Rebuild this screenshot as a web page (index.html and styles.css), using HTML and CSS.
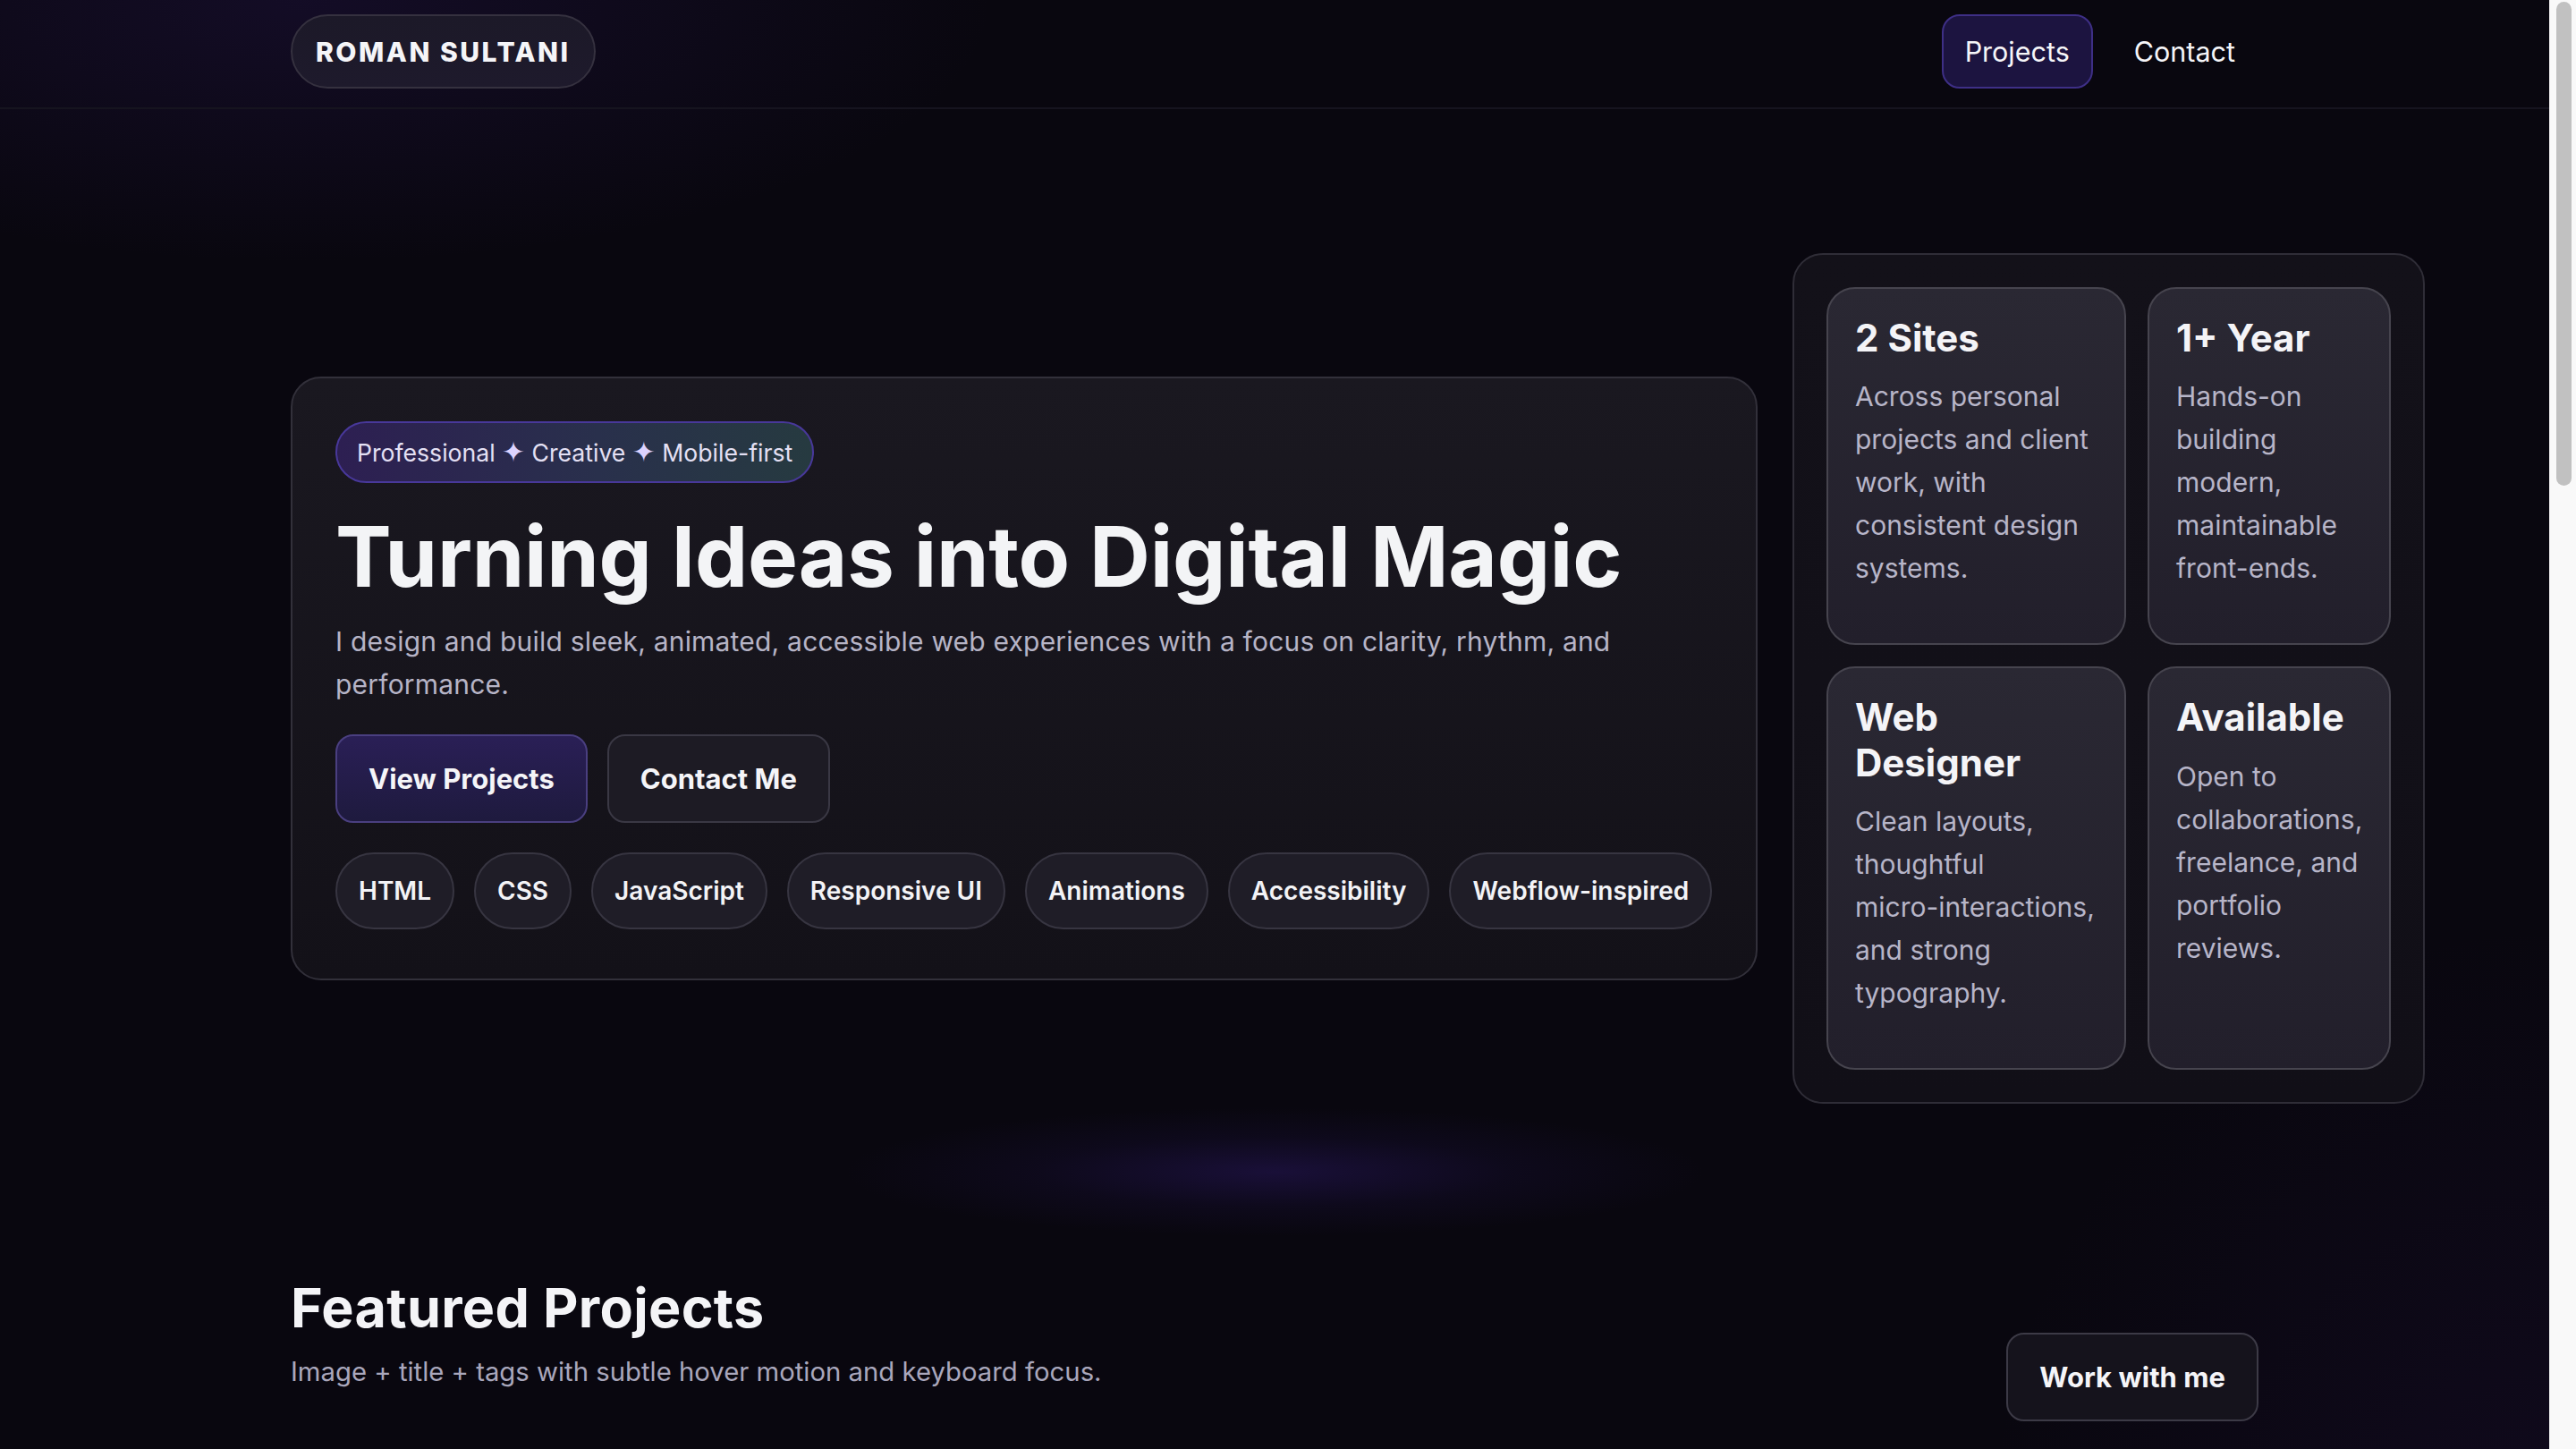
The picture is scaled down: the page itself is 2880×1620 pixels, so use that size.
FILE: index.html
```html
<!DOCTYPE html>
<html lang="en">
<head>
<meta charset="utf-8">
<title>Roman Sultani — Web Designer</title>
<link rel="stylesheet" href="styles.css">
</head>
<body>
<header class="site-header">
  <div class="container header-inner">
    <a class="logo" href="#">ROMAN SULTANI</a>
    <nav class="nav">
      <a class="nav-link active" href="#projects">Projects</a>
      <a class="nav-link" href="#contact">Contact</a>
    </nav>
  </div>
</header>
<main class="page">
  <section class="hero container">
    <div class="hero-grid">
      <div class="hero-card">
        <span class="badge">Professional <span class="spark">✦</span> Creative <span class="spark">✦</span> Mobile-first</span>
        <h1 class="hero-title">Turning Ideas into Digital Magic</h1>
        <p class="lead">I design and build sleek, animated, accessible web experiences with a focus on clarity, rhythm, and performance.</p>
        <div class="actions">
          <a class="btn btn-primary" href="#projects">View Projects</a>
          <a class="btn" href="#contact">Contact Me</a>
        </div>
        <ul class="chips">
          <li class="chip">HTML</li>
          <li class="chip">CSS</li>
          <li class="chip">JavaScript</li>
          <li class="chip">Responsive UI</li>
          <li class="chip">Animations</li>
          <li class="chip">Accessibility</li>
          <li class="chip">Webflow-inspired</li>
        </ul>
      </div>
      <div class="stats">
        <div class="stat">
          <h3 class="stat-title">2 Sites</h3>
          <p class="stat-text">Across personal projects and client work, with consistent design systems.</p>
        </div>
        <div class="stat">
          <h3 class="stat-title">1+ Year</h3>
          <p class="stat-text">Hands-on building modern, maintainable <span class="nowrap">front-ends.</span></p>
        </div>
        <div class="stat">
          <h3 class="stat-title">Web Designer</h3>
          <p class="stat-text">Clean layouts, thoughtful <span class="nowrap">micro-interactions,</span> and strong typography.</p>
        </div>
        <div class="stat">
          <h3 class="stat-title">Available</h3>
          <p class="stat-text">Open to collaborations, freelance, and portfolio reviews.</p>
        </div>
      </div>
    </div>
  </section>

  <div class="divider-glow"></div>

  <section class="projects container" id="projects">
    <div class="section-head">
      <div>
        <h2 class="section-title">Featured Projects</h2>
        <p class="section-sub">Image + title + tags with subtle hover motion and keyboard focus.</p>
      </div>
      <a class="btn btn-dark" href="#contact">Work with me</a>
    </div>
    <div class="project-grid">
      <article class="project">
        <div class="project-media"></div>
        <h3 class="project-title">Portfolio Site</h3>
        <p class="project-text">Personal portfolio with animated hero and project gallery.</p>
      </article>
      <article class="project">
        <div class="project-media"></div>
        <h3 class="project-title">Client Landing Page</h3>
        <p class="project-text">Responsive marketing page built with a reusable design system.</p>
      </article>
    </div>
  </section>

  <section class="contact container" id="contact">
    <h2 class="section-title">Let's work together</h2>
    <p class="section-sub">Open to collaborations, freelance, and portfolio reviews.</p>
  </section>
</main>
<div class="scrollbar" aria-hidden="true"><div class="scrollbar-thumb"></div></div>
</body>
</html>
```

FILE: styles.css
```css
html {
  background: #09070f;
}

body {
  margin: 0 30px 0 0;
  font-family: Inter, "Noto Sans", "DejaVu Sans", sans-serif;
  color: #f3f3f6;
  background:
    radial-gradient(1100px 420px at 12% 0%, rgba(62, 34, 130, 0.20), transparent 70%),
    radial-gradient(900px 1000px at 100% 35%, rgba(58, 26, 110, 0.15), transparent 70%),
    radial-gradient(900px 500px at 100% 100%, rgba(50, 26, 95, 0.08), transparent 70%),
    #09070f;
}

a {
  color: inherit;
  text-decoration: none;
}

.nowrap {
  white-space: nowrap;
}

.container {
  width: 2200px;
  margin: 0 auto;
}

/* Scrollbar (drawn, overlays the right edge of the window) */
.scrollbar {
  position: fixed;
  top: 0;
  right: 0;
  bottom: 0;
  width: 30px;
  background: #f9f9f9;
  border-left: 1px solid #efefef;
  box-sizing: border-box;
}

.scrollbar-thumb {
  position: absolute;
  top: 2px;
  left: 7px;
  width: 17px;
  height: 541px;
  border-radius: 9px;
  background: #c1c1c1;
}

/* Header */
.site-header {
  border-bottom: 2px solid #16141f;
}

.header-inner {
  display: flex;
  align-items: center;
  justify-content: space-between;
  padding: 16px 0 21px;
}

.logo {
  display: flex;
  align-items: center;
  height: 83px;
  box-sizing: border-box;
  padding: 0 26px;
  border: 2px solid #35313f;
  border-radius: 999px;
  background: linear-gradient(180deg, #1c1928, #1e1a2c);
  font-size: 30px;
  font-weight: 800;
  letter-spacing: 2.5px;
  color: #f5f5f8;
}

.nav {
  display: flex;
  gap: 20px;
}

.nav-link {
  display: flex;
  align-items: center;
  height: 83px;
  box-sizing: border-box;
  padding: 0 24px;
  border: 2px solid transparent;
  border-radius: 20px;
  font-size: 30.5px;
  color: #f5f5f8;
}

.nav-link.active {
  background: #1c1440;
  border-color: #3e2f86;
}

/* Hero */
.hero {
  padding-top: 161px;
}

.hero-grid {
  display: flex;
  align-items: center;
  gap: 39px;
}

.hero-card {
  flex: none;
  width: 1640px;
  box-sizing: border-box;
  padding: 48px 48px 55px;
  border: 2px solid #32303a;
  border-radius: 34px;
  background: linear-gradient(180deg, #1a1820 0%, #131118 100%);
}

.badge {
  display: inline-flex;
  align-items: center;
  height: 69px;
  box-sizing: border-box;
  padding: 0 22px;
  border: 2px solid #48389a;
  border-radius: 999px;
  background: linear-gradient(90deg, #2d1f52 0%, #29304c 55%, #263a40 100%);
  font-size: 26.6px;
  color: #e4e0f4;
  white-space: pre;
}

.spark {
  color: #ddd3ff;
  font-family: "DejaVu Sans", sans-serif;
  font-size: 31px;
  line-height: 1;
}

.hero-title {
  margin: 31px 0 0;
  font-size: 94px;
  line-height: 1.1;
  font-weight: 700;
  letter-spacing: -0.2px;
  color: #f3f4f6;
}

.lead {
  margin: 18px 0 0;
  max-width: 1450px;
  font-size: 30px;
  line-height: 48px;
  letter-spacing: 0.2px;
  color: #b6b4c6;
}

.actions {
  display: flex;
  gap: 22px;
  margin-top: 32px;
}

.btn {
  display: inline-flex;
  align-items: center;
  height: 99px;
  box-sizing: border-box;
  padding: 0 35px;
  border: 2px solid #3a3844;
  border-radius: 20px;
  background: #1d1b24;
  font-size: 31px;
  font-weight: 700;
  color: #f5f5f8;
}

.btn-primary {
  background: linear-gradient(180deg, #2a1f56 0%, #1e1a3e 100%);
  border-color: #4a3f80;
}

.btn-dark {
  background: #15131c;
  border-color: #3c3a46;
}

.chips {
  display: flex;
  flex-wrap: nowrap;
  gap: 22px;
  list-style: none;
  margin: 33px 0 0;
  padding: 0;
}

.chip {
  flex: none;
  display: flex;
  align-items: center;
  height: 86px;
  box-sizing: border-box;
  padding: 0 24px;
  border: 2px solid #373541;
  border-radius: 999px;
  background: #1f1d27;
  font-size: 28px;
  font-weight: 600;
  color: #f3f3f6;
}

/* Stats */
.stats {
  flex: none;
  width: 707px;
  box-sizing: border-box;
  padding: 36px;
  display: grid;
  grid-template-columns: 335px 272px;
  gap: 24px;
  border: 2px solid #2f2d37;
  border-radius: 34px;
  background: linear-gradient(180deg, #131119 0%, #110f17 100%);
}

.stat {
  box-sizing: border-box;
  padding: 30px;
  border: 2px solid #46444e;
  border-radius: 32px;
  background: linear-gradient(180deg, #2a2833 0%, #221f2b 100%);
}

.stat-title {
  margin: 0 0 16px;
  font-size: 42px;
  line-height: 1.2;
  font-weight: 700;
  color: #f4f4f7;
}

.stat-text {
  margin: 0 0 30px;
  font-size: 30px;
  line-height: 48px;
  color: #b7b5c8;
}

/* Divider glow */
.divider-glow {
  height: 192px;
  background: radial-gradient(480px 72px at 50% 76px, rgba(34, 20, 78, 0.65), rgba(26, 16, 60, 0.28) 55%, transparent 100%);
}

/* Projects */
.section-head {
  display: flex;
  align-items: flex-end;
  justify-content: space-between;
}

.section-title {
  margin: 0;
  font-size: 61px;
  line-height: 1.2;
  font-weight: 700;
  letter-spacing: 0.3px;
  color: #f4f4f7;
}

.section-sub {
  margin: 11px 0 31px;
  font-size: 29.3px;
  line-height: 48px;
  color: #a9a7bc;
}

.project-grid {
  display: grid;
  grid-template-columns: 1fr 1fr;
  gap: 48px;
  margin-top: 96px;
}

.project {
  padding: 24px;
  border: 2px solid #2f2d37;
  border-radius: 34px;
  background: #15131b;
}

.project-media {
  height: 1200px;
  border-radius: 24px;
  background: linear-gradient(135deg, #2a1f56, #1a2a3a);
}

.project-title {
  margin: 32px 0 12px;
  font-size: 42px;
  font-weight: 700;
}

.project-text {
  margin: 0 0 16px;
  font-size: 30px;
  line-height: 48px;
  color: #b7b5c8;
}

.contact {
  padding: 200px 0 1500px;
}
```
